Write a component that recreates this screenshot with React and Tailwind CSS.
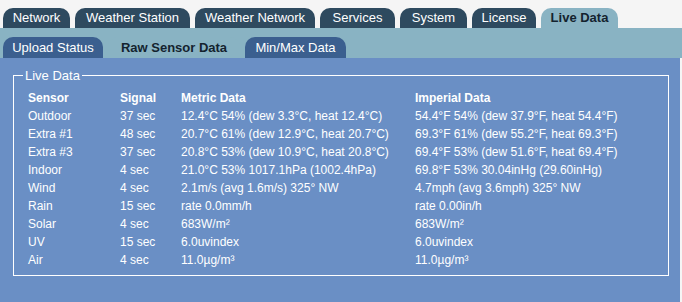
const topTabs = [
  ['Network', 'w-[67px]'],
  ['Weather Station', 'w-[115px]'],
  ['Weather Network', 'w-[120px]'],
  ['Services', 'w-[75px]'],
  ['System', 'w-[67px]'],
  ['License', 'w-[64px]'],
  ['Live Data', 'w-[77px]'],
];

const subTabs = [
  ['Upload Status', 'w-[100px]'],
  ['Raw Sensor Data', 'w-[132px]'],
  ['Min/Max Data', 'w-[101px]'],
];

const rows = [
  ['Outdoor', '37 sec', '12.4°C 54% (dew 3.3°C, heat 12.4°C)', '54.4°F 54% (dew 37.9°F, heat 54.4°F)'],
  ['Extra #1', '48 sec', '20.7°C 61% (dew 12.9°C, heat 20.7°C)', '69.3°F 61% (dew 55.2°F, heat 69.3°F)'],
  ['Extra #3', '37 sec', '20.8°C 53% (dew 10.9°C, heat 20.8°C)', '69.4°F 53% (dew 51.6°F, heat 69.4°F)'],
  ['Indoor', '4 sec', '21.0°C 53% 1017.1hPa (1002.4hPa)', '69.8°F 53% 30.04inHg (29.60inHg)'],
  ['Wind', '4 sec', '2.1m/s (avg 1.6m/s) 325° NW', '4.7mph (avg 3.6mph) 325° NW'],
  ['Rain', '15 sec', 'rate 0.0mm/h', 'rate 0.00in/h'],
  ['Solar', '4 sec', '683W/m²', '683W/m²'],
  ['UV', '15 sec', '6.0uvindex', '6.0uvindex'],
  ['Air', '4 sec', '11.0µg/m³', '11.0µg/m³'],
];

function Row({ cells, head }) {
  return (
    <div
      className={
        'grid grid-cols-[92px_61px_234px_1fr] h-[18px] items-center text-[12px] text-white ' +
        (head ? 'font-bold' : '')
      }
    >
      {cells.map((c, i) => (
        <span key={i} className="whitespace-nowrap">
          {c}
        </span>
      ))}
    </div>
  );
}

export default function App() {
  return (
    <div className="w-[682px] h-[302px] overflow-hidden bg-[#f5f5f5] font-['Liberation_Sans',Arial,sans-serif]">
      {/* main tabs */}
      <div className="flex items-end gap-[5px] pl-[3px] h-[28px]">
        {topTabs.map(([t, w]) =>
          t === 'Live Data' ? (
            <div
              key={t}
              className={`${w} h-[20px] flex items-center justify-center rounded-t-[10px] bg-[#89b3c3] text-[13px] font-bold text-[#14232f]`}
            >
              {t}
            </div>
          ) : (
            <div
              key={t}
              className={`${w} h-[20px] flex items-center justify-center rounded-t-[10px] bg-[#2e4a5f] text-[13px] text-white`}
            >
              {t}
            </div>
          )
        )}
      </div>

      {/* sub tabs */}
      <div className="flex items-end gap-[5px] pl-[3px] h-[30px] bg-[#89b3c3]">
        {subTabs.map(([t, w]) =>
          t === 'Raw Sensor Data' ? (
            <div
              key={t}
              className={`${w} h-[21px] flex items-center justify-center rounded-t-[10px] bg-[#89b3c3] text-[13px] font-bold text-[#14232f]`}
            >
              {t}
            </div>
          ) : (
            <div
              key={t}
              className={`${w} h-[21px] flex items-center justify-center rounded-t-[10px] bg-[#3b5f8f] text-[13px] text-white`}
            >
              {t}
            </div>
          )
        )}
      </div>

      {/* content */}
      <div className="w-[680px] h-[244px] bg-[#6a8fc5] pt-[10px]">
        <fieldset className="ml-[13px] w-[656px] h-[208px] border border-white pl-[9px]">
          <legend className="px-[2px] text-[13px] text-white leading-[15px]">Live Data</legend>
          <div className="ml-[5px] mt-[6px]">
            <Row head cells={['Sensor', 'Signal', 'Metric Data', 'Imperial Data']} />
            {rows.map((r) => (
              <Row key={r[0]} cells={r} />
            ))}
          </div>
        </fieldset>
      </div>
    </div>
  );
}
